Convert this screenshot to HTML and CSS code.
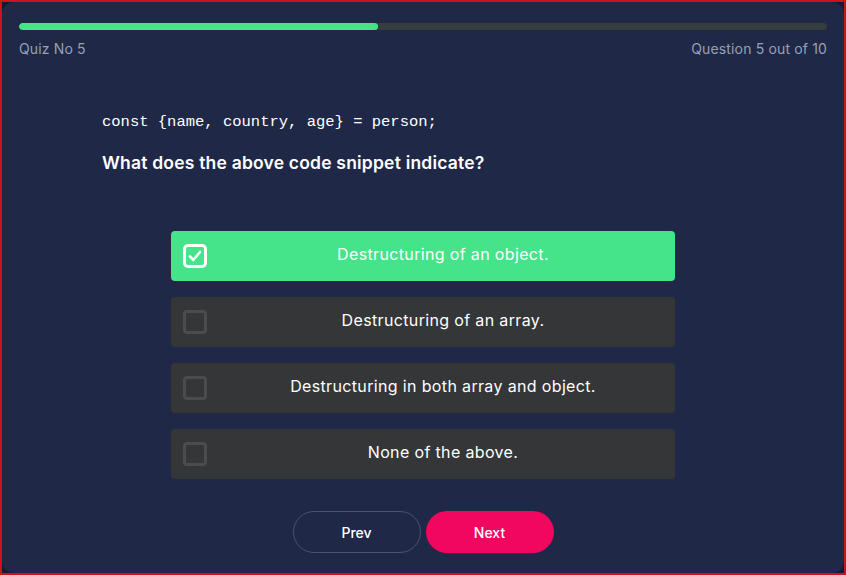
FILE: index.html
```html
<!DOCTYPE html>
<html>
<head>
<meta charset="utf-8">
<link rel="stylesheet" href="styles.css">
</head>
<body>
<div class="frame">
  <div class="card">
    <div class="progress"><div class="progress-fill" style="width:44.4%"></div></div>
    <div class="meta">
      <span>Quiz No 5</span>
      <span>Question 5 out of 10</span>
    </div>
    <div class="question">
      <pre class="code">const {name, country, age} = person;</pre>
      <p class="prompt">What does the above code snippet indicate?</p>
    </div>
    <div class="options">
      <div class="option selected">
        <span class="box"><svg viewBox="0 0 24 24" width="24" height="24"><rect x="1.5" y="1.5" width="21" height="21" rx="3.5" fill="none" stroke="#fff" stroke-width="3"/><path d="M7 12.5l3.3 3.5L17 8" fill="none" stroke="#fff" stroke-width="2.6" stroke-linecap="round" stroke-linejoin="round"/></svg></span>
        <span class="label">Destructuring of an object.</span>
      </div>
      <div class="option">
        <span class="box"></span>
        <span class="label">Destructuring of an array.</span>
      </div>
      <div class="option">
        <span class="box"></span>
        <span class="label">Destructuring in both array and object.</span>
      </div>
      <div class="option">
        <span class="box"></span>
        <span class="label">None of the above.</span>
      </div>
    </div>
    <div class="actions">
      <button class="btn prev">Prev</button>
      <button class="btn next">Next</button>
    </div>
  </div>
</div>
</body>
</html>
```
FILE: styles.css
```css
html, body {
  margin: 0;
  padding: 0;
  background: #141a38;
}
body {
  font-family: Inter, "Noto Sans", sans-serif;
}
.frame {
  width: 846px;
  height: 575px;
  box-sizing: border-box;
  border: 2px solid #d0101c;
  background: #131936;
}
.card {
  height: 100%;
  box-sizing: border-box;
  background: #1f2847;
  border-radius: 12px;
  padding: 21px 17px 0 17px;
}
.progress {
  height: 7px;
  border-radius: 4px;
  background: #373c3e;
  overflow: hidden;
}
.progress-fill {
  height: 100%;
  background: #45e38a;
  border-radius: 4px;
}
.meta {
  display: flex;
  justify-content: space-between;
  margin-top: 10px;
  font-size: 14px;
  color: #98a0b5;
  letter-spacing: 0.15px;
}
.question {
  padding: 55px 0 0 83px;
}
.code {
  margin: 0;
  font-family: "Liberation Mono", "DejaVu Sans Mono", monospace;
  font-size: 15.5px;
  color: #ffffff;
  line-height: 20px;
}
.prompt {
  margin: 20px 0 0 0;
  font-size: 17.5px;
  font-weight: 600;
  color: #ffffff;
  line-height: 22px;
  letter-spacing: 0.2px;
}
.options {
  width: 504px;
  margin: 57px auto 0 auto;
  display: flex;
  flex-direction: column;
  gap: 16px;
}
.option {
  height: 50px;
  border-radius: 4px;
  background: #343638;
  display: flex;
  align-items: center;
  padding-left: 12px;
  color: #ffffff;
  font-size: 16px;
  letter-spacing: 0.35px;
}
.option.selected {
  background: #45e38a;
}
.box {
  width: 24px;
  height: 24px;
  box-sizing: border-box;
  border: 3px solid #4a4d50;
  border-radius: 4px;
  flex: none;
}
.option.selected .box {
  border: none;
}
.box svg {
  display: block;
}
.label {
  flex: 1;
  text-align: center;
  margin-left: 4px;
  margin-top: -4px;
}
.actions {
  display: flex;
  justify-content: center;
  gap: 5px;
  margin-top: 32px;
}
.btn {
  width: 128px;
  height: 42px;
  border-radius: 21px;
  font-family: Inter, "Noto Sans", sans-serif;
  font-size: 14px;
  font-weight: 500;
  color: #ffffff;
  cursor: pointer;
}
.prev {
  background: transparent;
  border: 1px solid #4b5269;
}
.next {
  background: #f2075f;
  border: none;
}
```
